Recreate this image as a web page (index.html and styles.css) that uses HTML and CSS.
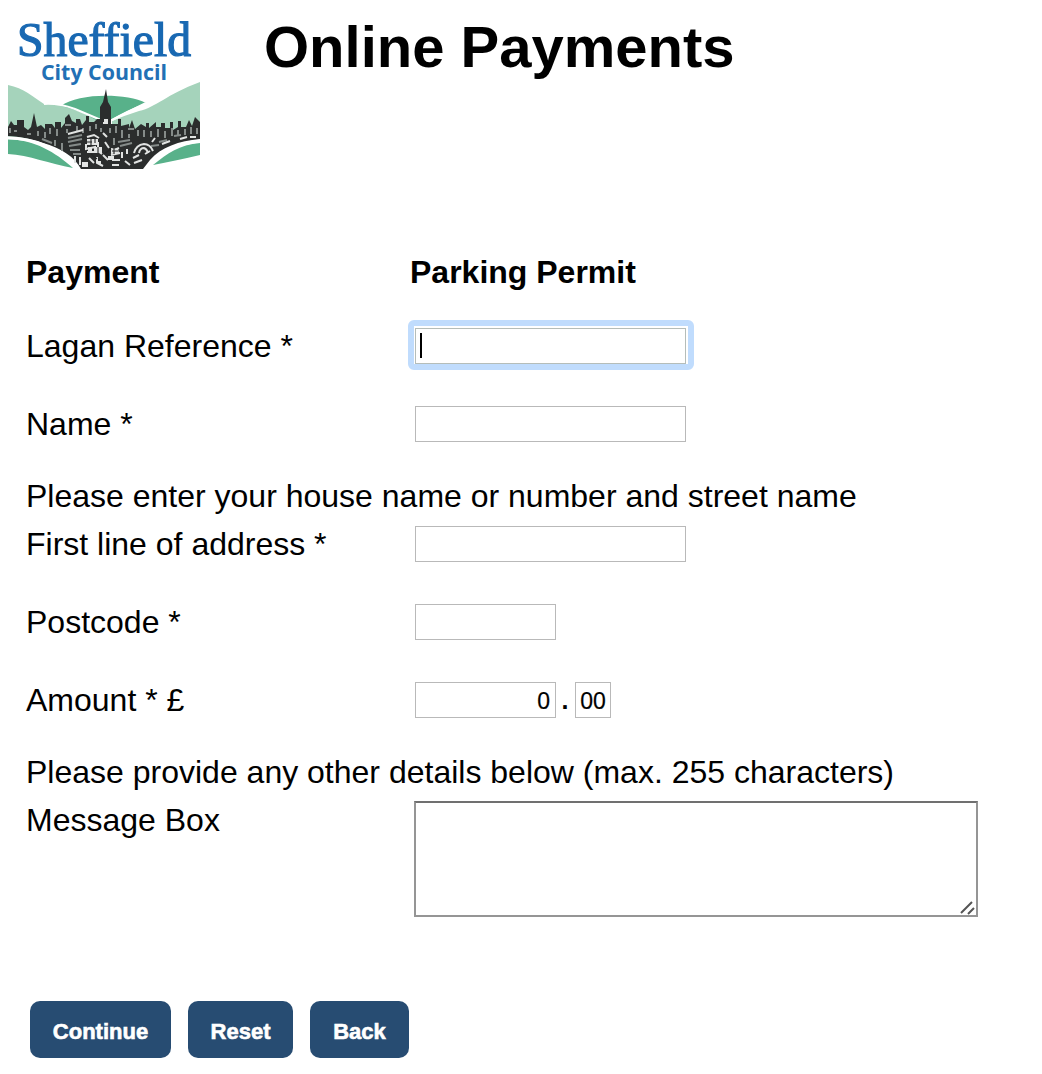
FILE: index.html
```html
<!DOCTYPE html>
<html lang="en">
<head>
<meta charset="utf-8">
<title>Online Payments</title>
<link rel="stylesheet" href="styles.css">
</head>
<body>
<header class="header">
  <svg class="logo" viewBox="8 16 192 153" role="img" aria-label="Sheffield City Council">
    <path fill="#a5d3bb" d="M8 85C24 88 33 97 44 104Q58 103 75 109L106 121V140L8 139Z"/>
    <path fill="#a5d3bb" d="M112 121Q126 115 139 111C157 107 165 95 200 82V138H112Z"/>
    <path fill="#58b18a" d="M61 106C78 93 126 93 146 103Q127 110 112 119L96 120Q80 110 61 106Z"/>
    <path fill="none" stroke="#fff" stroke-width="2" d="M44 104Q58 103 75 109L101 120M112 120Q128 112 146 103"/>
    <path fill="#2b2d2d" d="M8 136V127L11 121L14 125H17V120H24V127L28 130L31 127L34 113L37 127L41 125L45 129V124H52L55 128V122H61V128L65 123V118L69 114L72 121L76 123V119H80L82 125L86 120V116H89V122H94L97 119H100V107L103 102L106 89L108 102L111 107V124H118V119H121V126L129 124V128L132 120L135 129L141 124L146 127V123H149V128L156 122V127H161V123H165V128H170V122H173V130L178 127V121H181V127H186L189 120L192 126L195 117L200 122V139C179 141 161 147 150 160L143 169H81C75 157 61 148 43 143Q26 137 8 136Z"/>
    <g fill="none" stroke="#858b89" stroke-width="2">
      <path d="M10 128V133M14 131H17M27 134H31M38 131V136M45 132V138M50 128V134M57 129V136M65 125H71M67 129V133M77 126V131M83 128V133M90 126V131M96 124V129"/>
      <path d="M116 126V133M122 130V138M128 129H134M129 134V138M138 130V136M144 130V137M151 131V137M158 129V137M165 131V138M172 128V136M178 130V136M185 129V135M191 127V134M197 128V134M101 128V132M110 128V133"/>
      <path d="M42 139L52 143M55 140V146M62 143V151M68 138L82 135M68 142L82 139M69 146L81 144M70 150H80M73 154H81M114 138V145M118 142L130 140M120 146L132 143M159 142L167 140M151 146L159 145M174 136L181 135"/>
    </g>
    <g fill="none" stroke="#e1e3e2" stroke-width="2">
      <path d="M68 134L83 130M75 156V163M80 157V165M87 137L94 135L99 138M86 144V149L95 147V152H87M98 142V151L102 154M89 158L94 163M97 157V163L103 166M103 123H108M103 133L107 137M105 142L109 148M103 155L108 160M112 151L119 148M111 155L120 153M112 160H120M122 152V158M127 149V154M112 165H119M125 161L130 165M133 158L139 155M134 163L142 160M145 154L150 151M152 142L155 138M162 144L170 141M180 139L187 137M190 137H196"/>
      <path d="M134 153Q136 145 144 144Q150 144 153 151M139 153Q140 148 144 148Q147 149 148 153"/>
    </g>
    <g fill="#e3e5e4">
      <path d="M87 139H98V145H87ZM88 147H92V151H88ZM95 147H102V153H95ZM111 148L118 149L119 153L111 154ZM108 156H114V160H108ZM82 162H88V167H82ZM97 161H101V164H97ZM104 119H108V124H104Z"/>
    </g>
    <path fill="none" stroke="#242626" stroke-width="1.1" d="M91 138V146M95 138V143M87 142H92M114 148V154M112 151H118M98 147V153M104 154L111 149M91 154L97 159"/>
    <path fill="#58b18a" d="M8 139C35 140 55 152 73 168C50 164 29 155 8 154ZM153 165C168 153 179 145 200 143V155Q179 160 153 165Z"/>
    <path fill="none" stroke="#fff" stroke-width="3" d="M8 138Q48 138 77 168M149 166Q168 144 200 141"/>
    <text class="logo-name" x="17" y="56" textLength="174" lengthAdjust="spacingAndGlyphs">Sheffield</text>
    <text class="logo-council" x="41" y="80" textLength="126" lengthAdjust="spacingAndGlyphs">City Council</text>
  </svg>
  <h1 class="title">Online Payments</h1>
</header>
<form class="form">
  <div class="row heading"><span>Payment</span><span>Parking Permit</span></div>
  <div class="row lagan"><label for="ref">Lagan Reference *</label><div class="field focused" id="ref" tabindex="0"><span class="caret"></span></div></div>
  <div class="row"><label for="name">Name *</label><input class="field" id="name"></div>
  <p class="note">Please enter your house name or number and street name</p>
  <div class="row tight"><label for="address">First line of address *</label><input class="field" id="address"></div>
  <div class="row"><label for="postcode">Postcode *</label><input class="field short" id="postcode"></div>
  <div class="row"><label for="pounds">Amount * £</label><div class="amount"><input class="field short pounds" id="pounds" value="0"><span class="point">.</span><input class="field pence" aria-label="Pence" value="00"></div></div>
  <p class="note details">Please provide any other details below (max. 255 characters)</p>
  <div class="row message-row"><label for="message">Message Box</label>
    <div class="message-wrap"><textarea class="message" id="message"></textarea><svg class="grip" viewBox="0 0 16 16"><path d="M1 13L12 2M8 14L14 8"/></svg></div>
  </div>
  <div class="buttons">
    <button class="button continue" type="button">Continue</button>
    <button class="button reset" type="button">Reset</button>
    <button class="button back" type="button">Back</button>
  </div>
</form>
</body>
</html>
```
FILE: styles.css
```css
* { box-sizing: border-box; }
body { margin: 0; background: #fff; color: #000; font: 32px/36px "Liberation Sans", Arial, sans-serif; }
.header { display: flex; align-items: flex-start; height: 254px; padding: 16px 0 0 8px; }
.logo { width: 192px; height: 153px; flex: none; }
.logo-name { font: 49px "Liberation Serif", serif; fill: #1868b2; stroke: #1868b2; stroke-width: 1.2; }
.logo-council { font: bold 22px "Open Sans", sans-serif; fill: #2270b5; }
.title { margin: 0 0 0 64px; font-size: 58px; line-height: 62px; white-space: nowrap; }
.form { padding-left: 26px; }
.row { display: grid; grid-template-columns: 389px auto; justify-content: start; min-height: 36px; margin-top: 42px; white-space: nowrap; }
.heading { grid-template-columns: 384px auto; margin-top: 0; font-weight: bold; }
.lagan { margin-top: 38px; }
.tight { margin-top: 12px; }
.note { margin: 36px 0 0; white-space: nowrap; }
.field { width: 271px; height: 36px; margin: 0; padding: 2px 5px 0; border: 1px solid #b9b9b9; border-radius: 0; background: #fff; color: #000; font: 23px "Liberation Sans", Arial, sans-serif; -webkit-text-stroke: .2px #000; outline: none; }
.focused { position: relative; padding: 4px 0 0 4px; border-color: #b5bdb9; }
.focused::before { content: ""; position: absolute; inset: -9px -9px -7px -8px; border: 6px solid #c0dcfd; border-radius: 6px; }
.caret { display: block; width: 2px; height: 25px; background: #000; }
.short { width: 141px; }
.pounds { text-align: right; }
.amount { display: flex; }
.point { width: 18px; margin-right: 1px; text-align: center; font-weight: bold; font-size: 25px; }
.pence { width: 36px; padding: 2px 0 0; text-align: center; }
.message-row { margin-top: 11px; grid-template-columns: 388px auto; }
.message-row label { padding-top: 1px; }
.message-wrap { position: relative; width: 564px; height: 116px; }
.message { display: block; width: 100%; height: 100%; margin: 0; border: 2px solid #959595; border-top-color: #707070; border-radius: 0; background: #fff; resize: none; outline: none; }
.grip { position: absolute; right: 2px; bottom: 1px; width: 16px; height: 16px; fill: none; stroke: #555; stroke-width: 2; }
.buttons { display: flex; margin: 84px 0 0 4px; }
.button { height: 57px; padding: 4px 0 0; border: 0; border-radius: 10px; background: #274c72; color: #fff; font: bold 22px "Liberation Sans", Arial, sans-serif; -webkit-text-stroke: .6px #fff; }
.continue { width: 141px; }
.reset { width: 105px; margin-left: 17px; }
.back { width: 99px; margin-left: 17px; }
```
